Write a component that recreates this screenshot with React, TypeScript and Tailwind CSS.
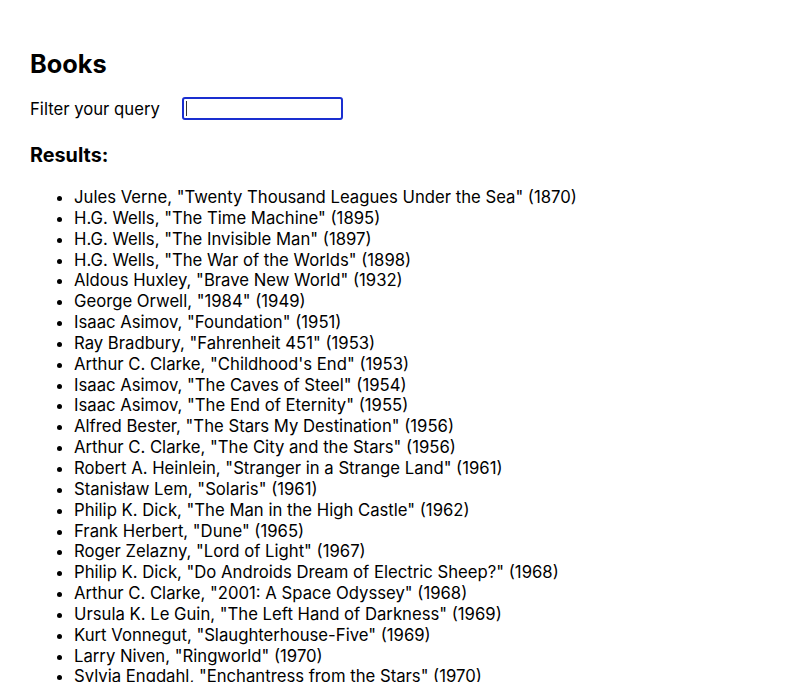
import { useState } from 'react'

const BOOKS = [
  'Jules Verne, "Twenty Thousand Leagues Under the Sea" (1870)',
  'H.G. Wells, "The Time Machine" (1895)',
  'H.G. Wells, "The Invisible Man" (1897)',
  'H.G. Wells, "The War of the Worlds" (1898)',
  'Aldous Huxley, "Brave New World" (1932)',
  'George Orwell, "1984" (1949)',
  'Isaac Asimov, "Foundation" (1951)',
  'Ray Bradbury, "Fahrenheit 451" (1953)',
  'Arthur C. Clarke, "Childhood\'s End" (1953)',
  'Isaac Asimov, "The Caves of Steel" (1954)',
  'Isaac Asimov, "The End of Eternity" (1955)',
  'Alfred Bester, "The Stars My Destination" (1956)',
  'Arthur C. Clarke, "The City and the Stars" (1956)',
  'Robert A. Heinlein, "Stranger in a Strange Land" (1961)',
  'Stanisław Lem, "Solaris" (1961)',
  'Philip K. Dick, "The Man in the High Castle" (1962)',
  'Frank Herbert, "Dune" (1965)',
  'Roger Zelazny, "Lord of Light" (1967)',
  'Philip K. Dick, "Do Androids Dream of Electric Sheep?" (1968)',
  'Arthur C. Clarke, "2001: A Space Odyssey" (1968)',
  'Ursula K. Le Guin, "The Left Hand of Darkness" (1969)',
  'Kurt Vonnegut, "Slaughterhouse-Five" (1969)',
  'Larry Niven, "Ringworld" (1970)',
  'Sylvia Engdahl, "Enchantress from the Stars" (1970)',
  'Frederik Pohl, "Gateway" (1977)',
  'Orson Scott Card, "Ender\'s Game" (1985)',
]

export default function App() {
  const [query, setQuery] = useState('')
  const results = BOOKS.filter((b) => b.toLowerCase().includes(query.toLowerCase()))

  return (
    <div className="px-[30px] pt-[50px] font-['Inter',sans-serif] text-[16.7px] text-black">
      <h2 className="text-[25.3px] font-bold leading-[28px]">Books</h2>
      <label className="mt-[19px] flex items-center gap-[22px] leading-[20px]">
        <span>Filter your query</span>
        <span className="relative flex">
          <input
            autoFocus
            value={query}
            onChange={(e) => setQuery(e.target.value)}
            className="h-[23px] w-[161px] rounded-[3px] border-2 border-[#1a2fd0] px-[3px] text-[14px] outline-none"
          />
          {/* caret stand-in, the headless shot does not paint the real one */}
          {query === '' && (
            <span className="pointer-events-none absolute left-[4px] top-[4px] h-[15px] w-px bg-[#333]" />
          )}
        </span>
      </label>
      <h3 className="mt-[23px] text-[19.8px] font-bold leading-[24px]">Results:</h3>
      <ul className="mt-[20px] list-disc pl-[44px] leading-[20.85px]">
        {results.map((b) => (
          <li key={b}>{b}</li>
        ))}
      </ul>
    </div>
  )
}
